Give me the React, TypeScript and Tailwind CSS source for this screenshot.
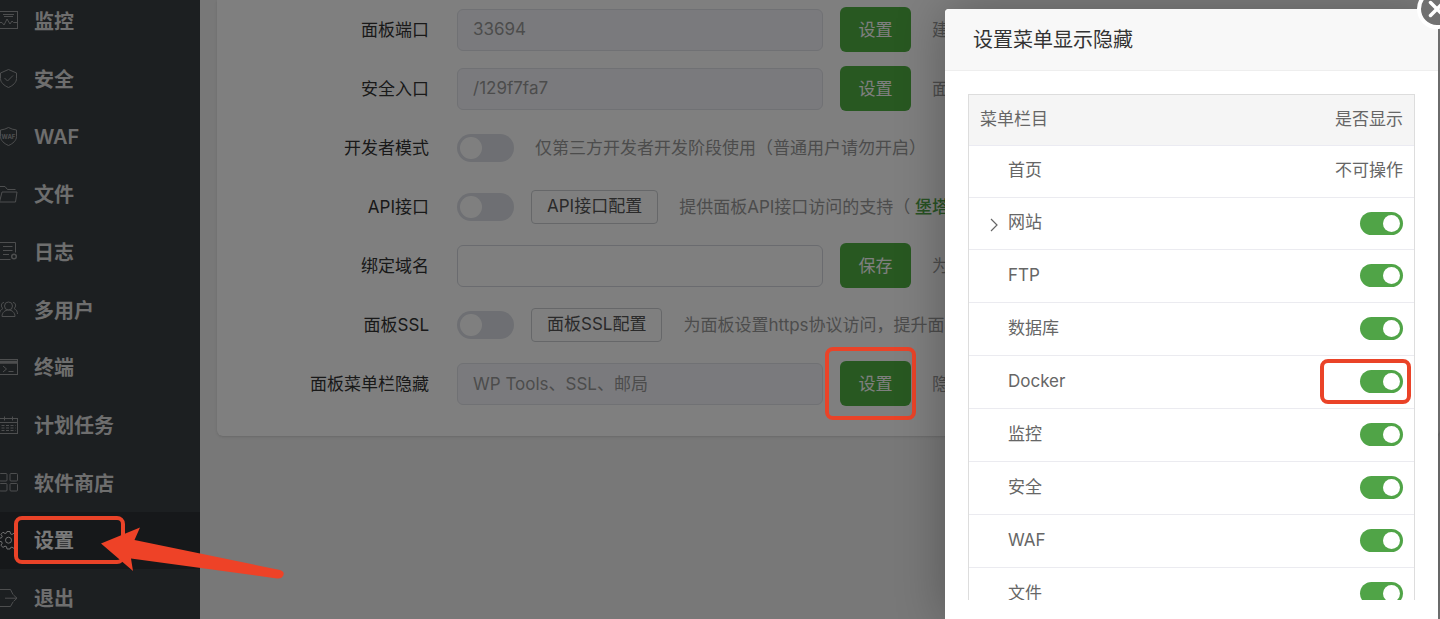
import { useState, type ReactNode } from "react";
import { clsx } from "clsx";

const menus: { name: string; icon: ReactNode; active?: boolean }[] = [
  {
    name: "监控",
    icon: (
      <>
        <rect x="-.5" y="0.5" width="18" height="17" />
        <path d="M3 3.5h11M4 5.5h9M0 11.500l2 0 2 2.500 3-6 3 5 2-3 1.500 1.500H17" />
      </>
    ),
  },
  {
    name: "安全",
    icon: (
      <>
        <path d="M8.500.5 16.500 4v5.500c0 4-3.500 7-8 9-4.500-2-8-5-8-9V4z" />
        <path d="m4.500 9 3 3 5.500-5.500" />
      </>
    ),
  },
  {
    name: "WAF",
    icon: (
      <>
        <path d="M8.500.5Q12 2.500 16.500 3v6.500c0 4-3.500 7-8 9-4.500-2-8-5-8-9V3Q5 2.500 8.500.5z" />
        <text x="8.500" y="11.500" textAnchor="middle" fontSize="6" fontWeight="700" fill="currentColor" stroke="none">
          WAF
        </text>
      </>
    ),
  },
  {
    name: "文件",
    icon: (
      <>
        <path d="M-.5 16V1.500h5.500l2.500 3h8" />
        <path d="M-.5 17 2 7h15l-1.500 10z" />
      </>
    ),
  },
  {
    name: "日志",
    icon: (
      <>
        <path d="M10.500 17.500H-.5V.5h16v10M3 4.500h9.500M3 8.500h9.500M3 12.500h6" />
        <circle cx="14" cy="14.500" r="2.300" strokeWidth="1.500" />
      </>
    ),
  },
  {
    name: "多用户",
    icon: (
      <>
        <circle cx="8.500" cy="6" r="4" />
        <path d="M2 16.500c0-4 3-6.500 6.500-6.500s6.500 2.500 6.500 6.500z" />
        <path d="M4 2.500C1 2.500.5 7 3 8.500.5 9.500-.5 12-.5 14M13 2.500c3 0 3.500 4.500 1 6 2.500 1 3.500 3.500 3.500 5.500" />
      </>
    ),
  },
  {
    name: "终端",
    icon: (
      <>
        <rect x="-.5" y="1.500" width="18" height="15" />
        <path d="M0 3.500h17M0 5h17" strokeWidth="1.600" />
        <path d="m3 8 3.500 3L3 14M8.500 13.500h5" />
      </>
    ),
  },
  {
    name: "计划任务",
    icon: (
      <>
        <rect x="-.5" y="2.500" width="18" height="15" />
        <path d="M0 6.500h17M4.500.5v4M12.500.5v4" />
        <path d="M1.500 9.500h14M1.500 12h14M1.500 14.500h14" strokeDasharray="3 1.500" />
      </>
    ),
  },
  {
    name: "软件商店",
    icon: (
      <>
        <rect x="-.5" y=".5" width="7.500" height="7.500" rx="1" />
        <rect x="10" y=".5" width="7.500" height="7.500" rx="1" />
        <rect x="-.5" y="10.500" width="7.500" height="7.500" rx="1" />
        <rect x="10" y="10.500" width="7.500" height="7.500" rx="1" />
      </>
    ),
  },
  {
    name: "设置",
    active: true,
    icon: (
      <>
        <path d="M7 .5h3l.5 2.300 1.500.7 2-1.300 2.100 2.100-1.300 2 .7 1.500 2.300.5v2.900l-2.300.5-.7 1.600 1.300 2-2.100 2.100-2-1.300-1.500.6L10 18H7l-.5-2.300-1.500-.6-2 1.300-2.100-2.100 1.300-2-.7-1.600-2.300-.5V7.300l2.300-.5.7-1.500-1.300-2L3 1.200l2 1.300 1.500-.6z" />
        <circle cx="8.500" cy="9.200" r="3" />
      </>
    ),
  },
  {
    name: "退出",
    icon: (
      <>
        <path d="M13 5.500 10.500.5H-.5v17h11L13 13" />
        <path d="M5 9.200h12M13.500 6l3.500 3.200-3.500 3.200" />
      </>
    ),
  },
];

const columns = [
  { name: "首页", locked: true },
  { name: "网站", expandable: true },
  { name: "FTP" },
  { name: "数据库" },
  { name: "Docker", marked: true },
  { name: "监控" },
  { name: "安全" },
  { name: "WAF" },
  { name: "文件" },
];

function Marker({ className }: { className: string }) {
  return (
    <span
      aria-hidden
      className={clsx("pointer-events-none absolute z-20 rounded-lg border-4 border-[#ea4328]", className)}
    />
  );
}

function FormRow({ id, label, children, hint }: { id: string; label: string; children: ReactNode; hint: ReactNode }) {
  return (
    <div className="flex h-[59px] items-center whitespace-nowrap">
      <label htmlFor={id} className="mr-7 w-[212px] shrink-0 pt-0.5 text-right text-[#333]">
        {label}
      </label>
      <div className="flex shrink-0 items-center gap-[17px]">{children}</div>
      <span className="ml-[21px] pt-0.5 text-[#999]">{hint}</span>
    </div>
  );
}

function TextField({ id, value, disabled }: { id: string; value: string; disabled?: boolean }) {
  return (
    <input
      id={id}
      type="text"
      defaultValue={value}
      disabled={disabled}
      className="h-[42px] w-[366px] rounded-md border border-[#d4d7de] bg-white px-[15px] pb-0.5 text-[#999] outline-none disabled:border-[#e0e2e8] disabled:bg-[#f5f5fa]"
    />
  );
}

function GreenButton({ children }: { children: ReactNode }) {
  return (
    <button type="button" className="h-[45px] w-[71px] rounded-md bg-[#50b043] pt-0.5 text-white">
      {children}
    </button>
  );
}

function OutlineButton({ children }: { children: ReactNode }) {
  return (
    <button type="button" className="h-[34px] rounded border border-[#ccced2] bg-white px-[15px] leading-none text-[#555]">
      {children}
    </button>
  );
}

function FormSwitch({ id }: { id: string }) {
  return (
    <input
      id={id}
      type="checkbox"
      role="switch"
      className="flex h-7 w-[57px] appearance-none items-center rounded-full bg-[#dcdfe6] px-[3px] before:size-[22px] before:rounded-full before:bg-white checked:justify-end checked:bg-[#50a447]"
    />
  );
}

function Sidebar() {
  return (
    <aside className="w-[200px] shrink-0 bg-[#393f43]">
      <nav className="-mt-2 flex h-[calc(100vh+16px)] flex-col">
        {menus.map((m) => (
          <a
            key={m.name}
            href="#"
            className={clsx(
              "relative flex flex-1 items-center gap-4 text-[20px] font-semibold",
              m.active ? "bg-[#2d3135] text-[#f4f4f4]" : "text-[#dcdcdc]",
            )}
          >
            <svg
              width="18"
              height="19"
              viewBox="0 0 18 19"
              fill="none"
              stroke="currentColor"
              strokeWidth="1"
              className={m.active ? "opacity-90" : "opacity-60"}
            >
              {m.icon}
            </svg>
            <span className="pt-0.5">{m.name}</span>
            {m.active && (
              <>
                <Marker className="top-1 left-3.5 h-12 w-[111px]" />
                <svg
                  aria-hidden
                  width="184"
                  height="54"
                  viewBox="0 0 184 54"
                  className="pointer-events-none absolute top-[15px] left-[100px] z-20"
                >
                  <path
                    d="M1 16.500 40 .5 34.500 13 180 43Q184.500 44.500 183.500 48Q182 52 177 51.500L31 31.500 33 44z"
                    fill="#ee4227"
                  />
                </svg>
              </>
            )}
          </a>
        ))}
      </nav>
    </aside>
  );
}

function SettingsForm() {
  return (
    <section className="rounded-b-md bg-white pb-[23px] shadow-sm">
      <FormRow id="port" label="面板端口" hint="建">
        <TextField id="port" value="33694" disabled />
        <GreenButton>设置</GreenButton>
      </FormRow>
      <FormRow id="entry" label="安全入口" hint="面">
        <TextField id="entry" value="/129f7fa7" disabled />
        <GreenButton>设置</GreenButton>
      </FormRow>
      <FormRow id="dev" label="开发者模式" hint="仅第三方开发者开发阶段使用（普通用户请勿开启）">
        <FormSwitch id="dev" />
      </FormRow>
      <FormRow
        id="api"
        label="API接口"
        hint={
          <>
            提供面板API接口访问的支持（{" "}
            <a href="#" className="font-medium text-[#50a447]">
              堡塔
            </a>
          </>
        }
      >
        <FormSwitch id="api" />
        <OutlineButton>API接口配置</OutlineButton>
      </FormRow>
      <FormRow id="domain" label="绑定域名" hint="为">
        <TextField id="domain" value="" />
        <GreenButton>保存</GreenButton>
      </FormRow>
      <FormRow id="ssl" label="面板SSL" hint="为面板设置https协议访问，提升面板">
        <FormSwitch id="ssl" />
        <OutlineButton>面板SSL配置</OutlineButton>
      </FormRow>
      <FormRow id="hidden" label="面板菜单栏隐藏" hint="隐">
        <TextField id="hidden" value="WP Tools、SSL、邮局" disabled />
        <span className="relative">
          <GreenButton>设置</GreenButton>
          <Marker className="-top-3.5 -left-[15px] h-[73px] w-[91px]" />
        </span>
      </FormRow>
    </section>
  );
}

function MenuDialog() {
  const [shown, setShown] = useState<Record<string, boolean>>({});

  return (
    <div
      role="dialog"
      aria-label="设置菜单显示隐藏"
      className="absolute top-[9px] right-0.5 bottom-0 z-30 flex w-[493px] flex-col rounded-t bg-white shadow-[1px_1px_50px_rgba(0,0,0,0.3)]"
    >
      <h2 className="shrink-0 rounded-t border-b border-[#eee] bg-[#f8f8f8] px-7 pt-[17px] pb-[15px] text-[20px] leading-[29px] text-[#333]">
        设置菜单显示隐藏
      </h2>
      <button
        type="button"
        aria-label="关闭"
        className="absolute -top-5 -right-[19px] flex size-10 items-center justify-center rounded-full border-4 border-white bg-[#717171] text-white"
      >
        <svg width="18" height="18" viewBox="0 0 18 18" stroke="currentColor" strokeWidth="3.500" strokeLinecap="round">
          <path d="m2.500 2.500 13 13m0-13-13 13" />
        </svg>
      </button>
      <div className="mx-[23px] mt-[23px] mb-[19px] min-h-0 flex-1 overflow-hidden border-x border-t border-[#ddd]">
        <table className="w-full text-[#666]">
          <thead>
            <tr className="h-[50px] border-b border-[#ebebf2] bg-[#f5f5f5]">
              <th className="pl-[11px] text-left font-normal">菜单栏目</th>
              <th className="pr-[11px] text-right font-normal">是否显示</th>
            </tr>
          </thead>
          <tbody>
            {columns.map((c) => (
              <tr
                key={c.name}
                className={clsx("border-b border-[#ebebf0]", c.locked || c.expandable ? "h-[52px]" : "h-[53px]")}
              >
                <td className="pl-[11px]">
                  <div className="flex items-center">
                    <span className="flex w-7 justify-center pt-1">
                      {c.expandable && (
                        <svg width="8" height="14" viewBox="0 0 8 14" fill="none" stroke="currentColor" strokeWidth="1.200">
                          <path d="m1 1 6 6-6 6" />
                        </svg>
                      )}
                    </span>
                    <label htmlFor={`col-${c.name}`}>{c.name}</label>
                  </div>
                </td>
                <td className="pr-[11px]">
                  {c.locked ? (
                    <p className="text-right">不可操作</p>
                  ) : (
                    <div className="relative flex justify-end">
                      <input
                        id={`col-${c.name}`}
                        type="checkbox"
                        role="switch"
                        checked={shown[c.name] ?? true}
                        onChange={(e) => setShown({ ...shown, [c.name]: e.target.checked })}
                        className="flex h-[23px] w-[43px] appearance-none items-center rounded-full bg-[#dcdfe6] px-[3px] before:size-[17px] before:rounded-full before:bg-white checked:justify-end checked:bg-[#50a447]"
                      />
                      {c.marked && <Marker className="-top-[11px] -right-2 h-[45px] w-[91px]" />}
                    </div>
                  )}
                </td>
              </tr>
            ))}
          </tbody>
        </table>
      </div>
    </div>
  );
}

export default function App() {
  return (
    <div className="relative flex h-screen overflow-hidden bg-[#f0f0f0] font-[Inter,'Noto_Sans_CJK_SC',sans-serif] text-[17px]">
      <Sidebar />
      <main className="min-w-0 flex-1 pl-[17px]">
        <SettingsForm />
      </main>
      <div className="absolute inset-0 z-10 bg-black/50" />
      <MenuDialog />
    </div>
  );
}
